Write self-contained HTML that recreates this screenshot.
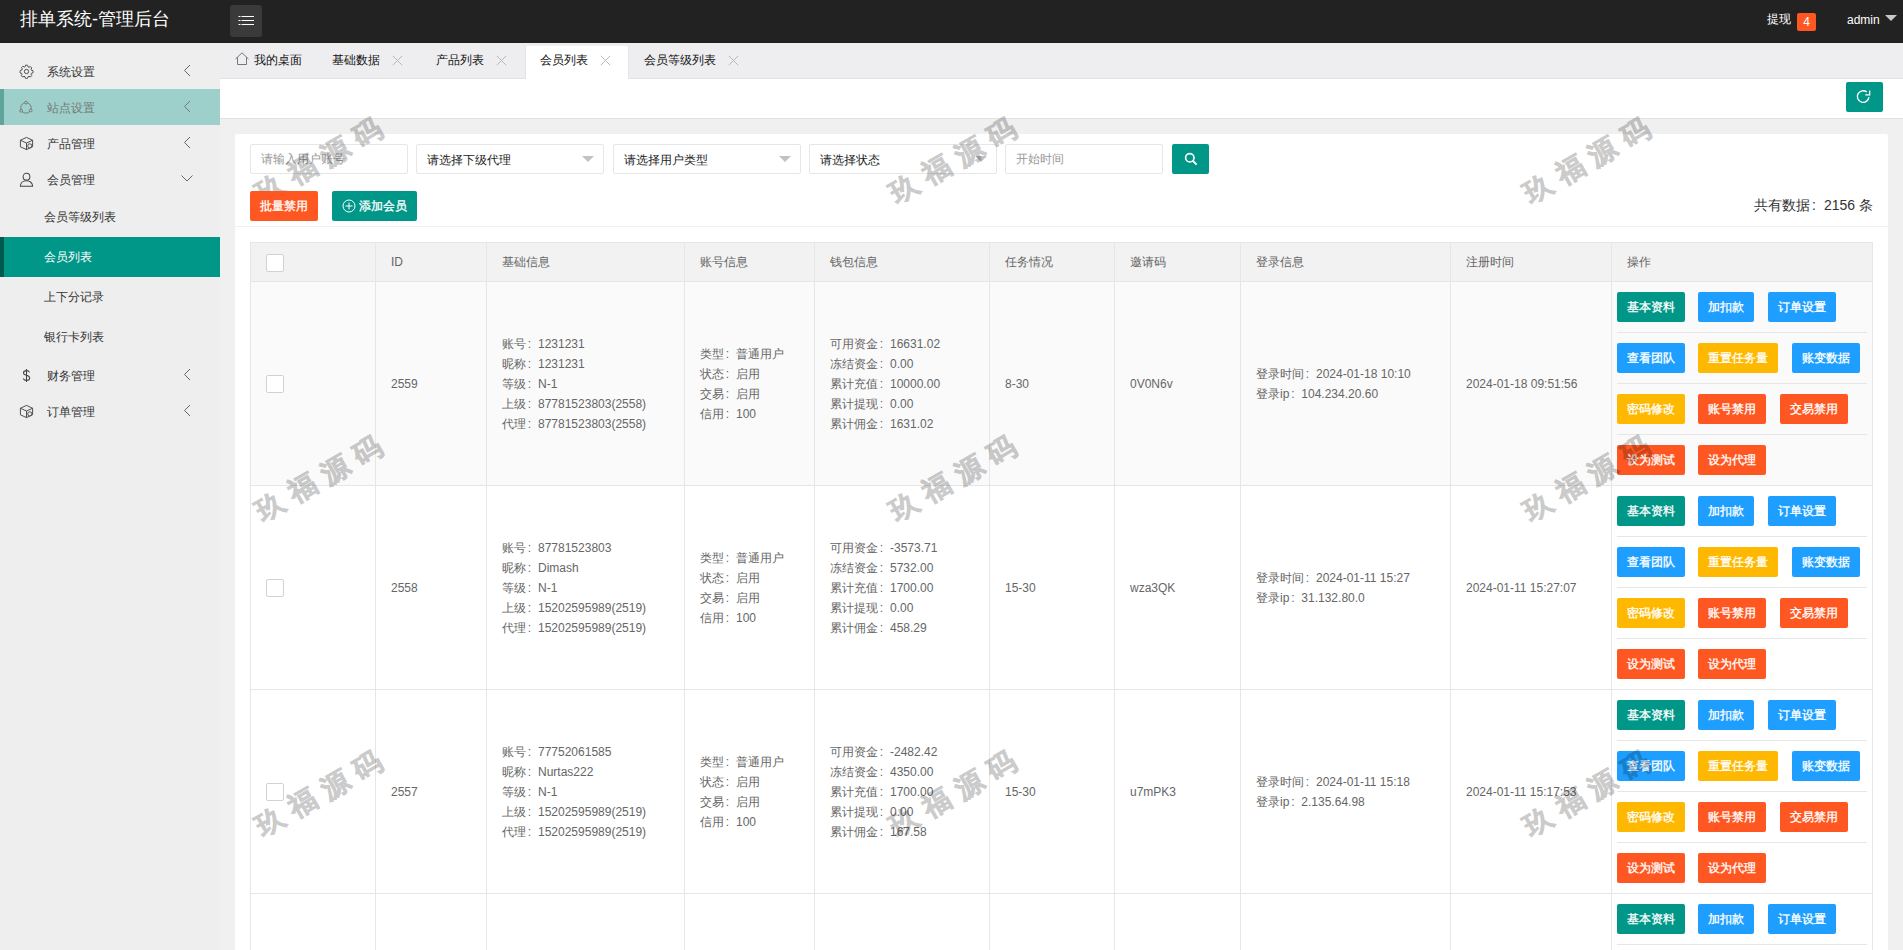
<!DOCTYPE html><html><head><meta charset="utf-8"><style>
*{box-sizing:border-box;margin:0;padding:0}
html,body{width:1903px;height:950px;overflow:hidden;background:#f0f0f0;font-family:"Liberation Sans",sans-serif;font-size:12px;color:#666}
.abs{position:absolute}
#hdr{position:absolute;left:0;top:0;width:1903px;height:43px;background:#222}
#logo{position:absolute;left:20px;top:8px;font-size:18px;color:#fff;line-height:22px;white-space:nowrap}
#ham{position:absolute;left:230px;top:5px;width:32px;height:32px;background:#3a3a3a;border-radius:3px}
#side{position:absolute;left:0;top:43px;width:220px;height:907px;background:#eee}
.nav{position:absolute;left:0;width:220px;height:36px;color:#333}
.nav .t{position:absolute;left:47px;top:12px;line-height:14px;white-space:nowrap}
.nav .ar{position:absolute;left:182px;top:11px}
.nav svg.ic{position:absolute;left:19px;top:11px}
.sub{position:absolute;left:0;width:220px;height:40px;color:#333}
.sub .t{position:absolute;left:44px;top:13px;line-height:14px;white-space:nowrap}
#tabs{position:absolute;left:220px;top:43px;width:1683px;height:36px;background:#eeeef0;border-bottom:1px solid #e2e2e2}
.tab{position:absolute;top:2px;height:34px;color:#111}
.tab .t{position:absolute;top:8px;line-height:14px;white-space:nowrap}
.tab .x{position:absolute;top:10px;width:11px;height:11px}
#tool{position:absolute;left:220px;top:79px;width:1683px;height:40px;background:#fff;border-bottom:1px solid #e2e2e2}
.btn{position:absolute;height:30px;line-height:30px;color:#fff;text-align:center;border-radius:2px;white-space:nowrap;font-size:12px;-webkit-text-stroke:0.3px #fff}
.g{background:#009688}.o{background:#FF5722}.b{background:#1E9FFF}.y{background:#FFB800}
#card{position:absolute;left:235px;top:134px;width:1653px;height:830px;background:#fff;border-radius:2px}
.inp{position:absolute;top:144px;height:30px;border:1px solid #e6e6e6;background:#fff;border-radius:2px}
.inp .t{position:absolute;left:10px;top:7px;line-height:14px;white-space:nowrap}
.caret{position:absolute;right:9px;top:11px;width:0;height:0;border-left:6px solid transparent;border-right:6px solid transparent;border-top:6px solid #c2c2c2}
table{position:absolute;left:250px;top:242px;border-collapse:collapse;table-layout:fixed}
td,th{border:1px solid #e6e6e6;vertical-align:middle;text-align:left;font-weight:normal;padding:0 15px;color:#666;line-height:20px;white-space:nowrap}
th{background:#f2f2f2;height:39px}
.cb{display:inline-block;width:18px;height:18px;border:1px solid #d2d2d2;background:#fff;border-radius:2px;vertical-align:middle}
.ops{position:relative;padding:0 0 0 5px}
.ol{position:relative;height:51px}
.ol .btn{top:10px}
.ol .sep{position:absolute;left:0;top:50px;width:250px;height:1px;background:#e6e6e6}
.wm{position:absolute;font-size:28px;letter-spacing:9px;font-weight:bold;color:#000;opacity:.2;-webkit-text-stroke:0.7px #000;transform:rotate(-30deg);white-space:nowrap;pointer-events:none;line-height:40px}

.cl{display:inline-block;width:1em;padding-left:.15em;text-align:left}
</style></head><body><div id="hdr"><div id="logo">排单系统-管理后台</div><div id="ham"><svg width="32" height="32" viewBox="0 0 32 32"><g stroke="#fff" stroke-width="1"><path d="M8.5 11.5H10.5M11.5 11.5H24M8.5 15.5H10.5M11.5 15.5H24M8.5 19.5H10.5M11.5 19.5H24"/></g></svg></div><div class="abs" style="left:1767px;top:12px;color:#fff;line-height:14px">提现</div><div class="abs" style="left:1797px;top:13px;width:19px;height:18px;background:#FF5722;border-radius:2px;color:#fff;text-align:center;line-height:18px;font-size:12px">4</div><div class="abs" style="left:1847px;top:13px;color:#fff;line-height:14px;font-size:12px">admin</div><div class="abs" style="left:1885px;top:15px;width:0;height:0;border-left:6px solid transparent;border-right:6px solid transparent;border-top:6px solid #c8c8c8"></div></div><div id="side"><div class="nav" style="top:10px"><svg class="ic" width="15" height="15" viewBox="0 0 16 16"><path d="M8 1.2l1.2.2.4 1.6 1 .5 1.5-.8 1.5 1.5-.8 1.5.5 1 1.6.4.2 1.2-.2 1.2-1.6.4-.5 1 .8 1.5-1.5 1.5-1.5-.8-1 .5-.4 1.6-1.2.2-1.2-.2-.4-1.6-1-.5-1.5.8-1.5-1.5.8-1.5-.5-1-1.6-.4L1.2 8l.2-1.2 1.6-.4.5-1-.8-1.5 1.5-1.5 1.5.8 1-.5.4-1.6z" fill="none" stroke="#444" stroke-width="1"/><circle cx="8" cy="8" r="2.3" fill="none" stroke="#444" stroke-width="1"/></svg><div class="t">系统设置</div><svg class="ar" width="10" height="14" viewBox="0 0 10 14"><polyline points="8,1 2.5,6.5 8,12" fill="none" stroke="#666" stroke-width="1"/></svg></div><div class="nav" style="top:46px;background:#9dd0ca;color:#777"><div class="abs" style="left:0;top:0;width:4px;height:36px;background:#5fa59c"></div><svg class="ic" width="15" height="15" viewBox="0 0 16 16"><circle cx="7.4" cy="8.4" r="5.6" fill="none" stroke="#777" stroke-width="1"/><circle cx="7.4" cy="2.8" r="1.5" fill="#9dd0ca" stroke="#777"/><circle cx="2.3" cy="11.5" r="1.5" fill="#9dd0ca" stroke="#777"/><circle cx="12.5" cy="11.2" r="1.5" fill="#9dd0ca" stroke="#777"/></svg><div class="t">站点设置</div><svg class="ar" width="10" height="14" viewBox="0 0 10 14"><polyline points="8,1 2.5,6.5 8,12" fill="none" stroke="#777" stroke-width="1"/></svg></div><div class="nav" style="top:82px"><svg class="ic" width="15" height="15" viewBox="0 0 16 16"><path d="M1.5 4.5L8 1.5l6.5 3v7L8 14.5l-6.5-3z M1.5 4.5L8 7.5l6.5-3 M8 7.5v7" fill="none" stroke="#444" stroke-width="1"/><circle cx="11.5" cy="10.5" r="2.2" fill="#eee" stroke="#444" stroke-width="1"/></svg><div class="t">产品管理</div><svg class="ar" width="10" height="14" viewBox="0 0 10 14"><polyline points="8,1 2.5,6.5 8,12" fill="none" stroke="#666" stroke-width="1"/></svg></div><div class="nav" style="top:118px"><svg class="ic" width="15" height="15" viewBox="0 0 16 16"><circle cx="8" cy="5" r="3.6" fill="none" stroke="#444" stroke-width="1.1"/><path d="M1.5 15.2c0-3.6 2.9-5.8 6.5-5.8s6.5 2.2 6.5 5.8z" fill="none" stroke="#444" stroke-width="1.1"/></svg><div class="t">会员管理</div><svg class="ar" style="left:180px;top:11.5px" width="14" height="10" viewBox="0 0 14 10"><polyline points="1.5,2.5 7,8 12.5,2.5" fill="none" stroke="#666" stroke-width="1"/></svg></div><div class="sub" style="top:154px"><div class="t">会员等级列表</div></div><div class="sub" style="top:194px;background:#009688;color:#fff"><div class="abs" style="left:0;top:0;width:4px;height:40px;background:#00584f"></div><div class="t">会员列表</div></div><div class="sub" style="top:234px"><div class="t">上下分记录</div></div><div class="sub" style="top:274px"><div class="t">银行卡列表</div></div><div class="nav" style="top:314px"><svg class="ic" width="15" height="15" viewBox="0 0 16 16"><path d="M11.2 4.6C10.8 3.4 9.6 2.8 8 2.8c-2 0-3.2 1-3.2 2.4 0 3.2 6.6 2 6.6 5.4 0 1.5-1.3 2.6-3.4 2.6-1.7 0-3-.7-3.4-2M8 1v14" fill="none" stroke="#444" stroke-width="1.1"/></svg><div class="t">财务管理</div><svg class="ar" width="10" height="14" viewBox="0 0 10 14"><polyline points="8,1 2.5,6.5 8,12" fill="none" stroke="#666" stroke-width="1"/></svg></div><div class="nav" style="top:350px"><svg class="ic" width="15" height="15" viewBox="0 0 16 16"><path d="M1.5 4.5L8 1.5l6.5 3v7L8 14.5l-6.5-3z M1.5 4.5L8 7.5l6.5-3 M8 7.5v7" fill="none" stroke="#444" stroke-width="1"/><circle cx="11.5" cy="10.5" r="2.2" fill="#eee" stroke="#444" stroke-width="1"/></svg><div class="t">订单管理</div><svg class="ar" width="10" height="14" viewBox="0 0 10 14"><polyline points="8,1 2.5,6.5 8,12" fill="none" stroke="#666" stroke-width="1"/></svg></div></div><div id="tabs"><div class="tab" style="left:0;width:98px"><svg class="abs" style="left:15px;top:7px" width="15" height="15" viewBox="0 0 15 15"><path d="M0.5 7L7 0.8 13.5 7M2.5 5.2V12.5h9V5.2" fill="none" stroke="#777" stroke-width="1"/></svg><div class="t" style="left:34px">我的桌面</div></div><div class="tab" style="left:98px;width:104px"><div class="t" style="left:14px">基础数据</div><div class="x" style="left:74px"><svg class="abs" width="11" height="11" viewBox="0 0 11 11"><path d="M0.8 0.8L10.2 10.2M10.2 0.8L0.8 10.2" stroke="#b8b8b8" stroke-width="1"/></svg></div></div><div class="tab" style="left:202px;width:104px"><div class="t" style="left:14px">产品列表</div><div class="x" style="left:74px"><svg class="abs" width="11" height="11" viewBox="0 0 11 11"><path d="M0.8 0.8L10.2 10.2M10.2 0.8L0.8 10.2" stroke="#b8b8b8" stroke-width="1"/></svg></div></div><div class="tab" style="left:305px;width:104px;background:#fff;box-shadow:inset 1px 0 #e4e4e4,inset -1px 0 #e4e4e4,inset 0 1px #f0f0f0"><div class="t" style="left:15px">会员列表</div><div class="x" style="left:75px"><svg class="abs" width="11" height="11" viewBox="0 0 11 11"><path d="M0.8 0.8L10.2 10.2M10.2 0.8L0.8 10.2" stroke="#b8b8b8" stroke-width="1"/></svg></div></div><div class="tab" style="left:408px;width:118px"><div class="t" style="left:16px">会员等级列表</div><div class="x" style="left:100px"><svg class="abs" width="11" height="11" viewBox="0 0 11 11"><path d="M0.8 0.8L10.2 10.2M10.2 0.8L0.8 10.2" stroke="#b8b8b8" stroke-width="1"/></svg></div></div></div><div id="tool"><div class="btn g" style="left:1626px;top:3px;width:37px;height:30px"><svg style="position:absolute;left:0;top:0" width="37" height="30" viewBox="0 0 37 30"><path d="M22.9 15.1A5.8 5.8 0 1 1 20.8 10.1" fill="none" stroke="#fff" stroke-width="1.3"/><path d="M23.7 8.6V12.8H19.2" fill="none" stroke="#fff" stroke-width="1.3"/></svg></div></div><div id="card"></div><div class="abs" style="left:235px;top:226px;width:1653px;height:1px;background:#f0f0f0"></div><div class="inp" style="left:250px;width:158px"><div class="t" style="color:#999">请输入用户账号</div></div><div class="inp" style="left:416px;width:188px"><div class="t" style="color:#222;top:8px">请选择下级代理</div><div class="caret"></div></div><div class="inp" style="left:613px;width:188px"><div class="t" style="color:#222;top:8px">请选择用户类型</div><div class="caret"></div></div><div class="inp" style="left:809px;width:188px"><div class="t" style="color:#222;top:8px">请选择状态</div><div class="caret"></div></div><div class="inp" style="left:1005px;width:158px"><div class="t" style="color:#999">开始时间</div></div><div class="btn g" style="left:1172px;top:144px;width:37px"><svg style="position:absolute;left:12px;top:8px" width="14" height="14" viewBox="0 0 14 14"><circle cx="5.8" cy="5.8" r="4.2" fill="none" stroke="#fff" stroke-width="1.6"/><path d="M9 9l3.6 3.6" stroke="#fff" stroke-width="2"/></svg></div><div class="btn o" style="left:250px;top:191px;width:68px;z-index:5">批量禁用</div><div class="btn g" style="left:332px;top:191px;width:85px;z-index:5"><svg style="position:absolute;left:10px;top:8px" width="14" height="14" viewBox="0 0 14 14"><circle cx="7" cy="7" r="6" fill="none" stroke="#fff" stroke-width="1"/><path d="M7 3.5v7M3.5 7h7" stroke="#fff" stroke-width="1"/></svg><span style="position:absolute;left:27px">添加会员</span></div><div class="abs" style="left:1754px;top:197px;line-height:16px;color:#333;font-size:14px">共有数据<span class="cl">:</span>2156 条</div><table><colgroup><col style="width:125px"><col style="width:111px"><col style="width:198px"><col style="width:130px"><col style="width:175px"><col style="width:125px"><col style="width:126px"><col style="width:210px"><col style="width:161px"><col style="width:261px"></colgroup><tr><th><span class="cb"></span></th><th>ID</th><th>基础信息</th><th>账号信息</th><th>钱包信息</th><th>任务情况</th><th>邀请码</th><th>登录信息</th><th>注册时间</th><th>操作</th></tr><tr style="height:203px;background:#fafafa"><td><span class="cb"></span></td><td>2559</td><td>账号<span class="cl">:</span>1231231<br>昵称<span class="cl">:</span>1231231<br>等级<span class="cl">:</span>N-1<br>上级<span class="cl">:</span>87781523803(2558)<br>代理<span class="cl">:</span>87781523803(2558)</td><td>类型<span class="cl">:</span>普通用户<br>状态<span class="cl">:</span>启用<br>交易<span class="cl">:</span>启用<br>信用<span class="cl">:</span>100</td><td>可用资金<span class="cl">:</span>16631.02<br>冻结资金<span class="cl">:</span>0.00<br>累计充值<span class="cl">:</span>10000.00<br>累计提现<span class="cl">:</span>0.00<br>累计佣金<span class="cl">:</span>1631.02</td><td>8-30</td><td>0V0N6v</td><td>登录时间<span class="cl">:</span>2024-01-18 10:10<br>登录ip<span class="cl">:</span>104.234.20.60</td><td>2024-01-18 09:51:56</td><td style="padding:0"><div class="ops"><div class="ol"><div class="btn g" style="left:0px;width:68px">基本资料</div><div class="btn b" style="left:81px;width:56px">加扣款</div><div class="btn b" style="left:151px;width:68px">订单设置</div><div class="sep"></div></div><div class="ol"><div class="btn b" style="left:0px;width:68px">查看团队</div><div class="btn y" style="left:81px;width:80px">重置任务量</div><div class="btn b" style="left:175px;width:68px">账变数据</div><div class="sep"></div></div><div class="ol"><div class="btn y" style="left:0px;width:68px">密码修改</div><div class="btn o" style="left:81px;width:68px">账号禁用</div><div class="btn o" style="left:163px;width:68px">交易禁用</div><div class="sep"></div></div><div class="ol" style="height:50px"><div class="btn o" style="left:0px;width:68px">设为测试</div><div class="btn o" style="left:81px;width:68px">设为代理</div></div></div></td></tr><tr style="height:203px;background:#fff"><td><span class="cb"></span></td><td>2558</td><td>账号<span class="cl">:</span>87781523803<br>昵称<span class="cl">:</span>Dimash<br>等级<span class="cl">:</span>N-1<br>上级<span class="cl">:</span>15202595989(2519)<br>代理<span class="cl">:</span>15202595989(2519)</td><td>类型<span class="cl">:</span>普通用户<br>状态<span class="cl">:</span>启用<br>交易<span class="cl">:</span>启用<br>信用<span class="cl">:</span>100</td><td>可用资金<span class="cl">:</span>-3573.71<br>冻结资金<span class="cl">:</span>5732.00<br>累计充值<span class="cl">:</span>1700.00<br>累计提现<span class="cl">:</span>0.00<br>累计佣金<span class="cl">:</span>458.29</td><td>15-30</td><td>wza3QK</td><td>登录时间<span class="cl">:</span>2024-01-11 15:27<br>登录ip<span class="cl">:</span>31.132.80.0</td><td>2024-01-11 15:27:07</td><td style="padding:0"><div class="ops"><div class="ol"><div class="btn g" style="left:0px;width:68px">基本资料</div><div class="btn b" style="left:81px;width:56px">加扣款</div><div class="btn b" style="left:151px;width:68px">订单设置</div><div class="sep"></div></div><div class="ol"><div class="btn b" style="left:0px;width:68px">查看团队</div><div class="btn y" style="left:81px;width:80px">重置任务量</div><div class="btn b" style="left:175px;width:68px">账变数据</div><div class="sep"></div></div><div class="ol"><div class="btn y" style="left:0px;width:68px">密码修改</div><div class="btn o" style="left:81px;width:68px">账号禁用</div><div class="btn o" style="left:163px;width:68px">交易禁用</div><div class="sep"></div></div><div class="ol" style="height:50px"><div class="btn o" style="left:0px;width:68px">设为测试</div><div class="btn o" style="left:81px;width:68px">设为代理</div></div></div></td></tr><tr style="height:203px;background:#fff"><td><span class="cb"></span></td><td>2557</td><td>账号<span class="cl">:</span>77752061585<br>昵称<span class="cl">:</span>Nurtas222<br>等级<span class="cl">:</span>N-1<br>上级<span class="cl">:</span>15202595989(2519)<br>代理<span class="cl">:</span>15202595989(2519)</td><td>类型<span class="cl">:</span>普通用户<br>状态<span class="cl">:</span>启用<br>交易<span class="cl">:</span>启用<br>信用<span class="cl">:</span>100</td><td>可用资金<span class="cl">:</span>-2482.42<br>冻结资金<span class="cl">:</span>4350.00<br>累计充值<span class="cl">:</span>1700.00<br>累计提现<span class="cl">:</span>0.00<br>累计佣金<span class="cl">:</span>167.58</td><td>15-30</td><td>u7mPK3</td><td>登录时间<span class="cl">:</span>2024-01-11 15:18<br>登录ip<span class="cl">:</span>2.135.64.98</td><td>2024-01-11 15:17:53</td><td style="padding:0"><div class="ops"><div class="ol"><div class="btn g" style="left:0px;width:68px">基本资料</div><div class="btn b" style="left:81px;width:56px">加扣款</div><div class="btn b" style="left:151px;width:68px">订单设置</div><div class="sep"></div></div><div class="ol"><div class="btn b" style="left:0px;width:68px">查看团队</div><div class="btn y" style="left:81px;width:80px">重置任务量</div><div class="btn b" style="left:175px;width:68px">账变数据</div><div class="sep"></div></div><div class="ol"><div class="btn y" style="left:0px;width:68px">密码修改</div><div class="btn o" style="left:81px;width:68px">账号禁用</div><div class="btn o" style="left:163px;width:68px">交易禁用</div><div class="sep"></div></div><div class="ol" style="height:50px"><div class="btn o" style="left:0px;width:68px">设为测试</div><div class="btn o" style="left:81px;width:68px">设为代理</div></div></div></td></tr><tr style="height:203px"><td></td><td></td><td></td><td></td><td></td><td></td><td></td><td></td><td></td><td style="padding:0;vertical-align:top"><div class="ops"><div class="ol"><div class="btn g" style="left:0px;width:68px">基本资料</div><div class="btn b" style="left:81px;width:56px">加扣款</div><div class="btn b" style="left:151px;width:68px">订单设置</div><div class="sep"></div></div><div class="ol"><div class="btn b" style="left:0px;width:68px">查看团队</div><div class="btn y" style="left:81px;width:80px">重置任务量</div><div class="btn b" style="left:175px;width:68px">账变数据</div><div class="sep"></div></div><div class="ol"><div class="btn y" style="left:0px;width:68px">密码修改</div><div class="btn o" style="left:81px;width:68px">账号禁用</div><div class="btn o" style="left:163px;width:68px">交易禁用</div><div class="sep"></div></div><div class="ol" style="height:50px"><div class="btn o" style="left:0px;width:68px">设为测试</div><div class="btn o" style="left:81px;width:68px">设为代理</div></div></div></td></tr></table><div class="wm" style="left:249px;top:139px">玖福源码</div><div class="wm" style="left:883px;top:139px">玖福源码</div><div class="wm" style="left:1517px;top:139px">玖福源码</div><div class="wm" style="left:249px;top:457px">玖福源码</div><div class="wm" style="left:883px;top:457px">玖福源码</div><div class="wm" style="left:1517px;top:457px">玖福源码</div><div class="wm" style="left:249px;top:772px">玖福源码</div><div class="wm" style="left:883px;top:772px">玖福源码</div><div class="wm" style="left:1517px;top:772px">玖福源码</div></body></html>
